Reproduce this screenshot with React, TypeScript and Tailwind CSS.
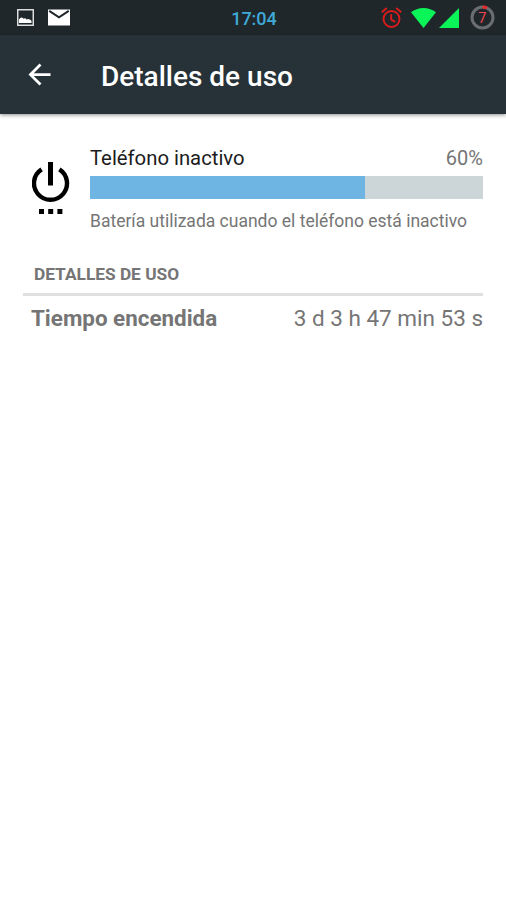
const usage = {
  name: "Teléfono inactivo",
  percent: "60%",
  barWidth: 70,
  summary: "Batería utilizada cuando el teléfono está inactivo",
};

const details = [{ label: "Tiempo encendida", value: "3 d 3 h 47 min 53 s" }];

function StatusBar() {
  return (
    <div className="grid h-[35px] grid-cols-[1fr_auto_1fr] items-center bg-[#20272a]">
      <div className="flex items-center gap-[14px] pl-[17px]">
        <svg width="17" height="17" viewBox="0 0 17 17" fill="none">
          <rect x="0.75" y="0.75" width="15.5" height="15.5" stroke="#e6e8e8" strokeWidth="1.4" />
          <path d="M2 14v-3.600q2.300-3.300 4.600-.7 1.700-1.300 3 .8 2.200-1.400 4.900 1.300V14z" fill="#fff" />
        </svg>
        <svg width="22" height="17" viewBox="0 0 22 17">
          <path d="M0 .5h22v16H0z" fill="#fff" />
          <path d="M1.200 1.800 11 8.300l9.800-6.500" fill="none" stroke="#20272a" strokeWidth="2" />
        </svg>
      </div>
      <time className="pt-0.5 pl-0.5 text-[18px] leading-none font-medium text-[#3fa9d8]">17:04</time>
      <div className="flex items-center justify-end pr-[11px]">
        <svg
          className="mr-[9px]"
          width="21"
          height="22"
          viewBox="0 0 21 22"
          fill="none"
          stroke="#dc1c1c"
          strokeWidth="1.9"
        >
          <circle cx="10.5" cy="12" r="8" />
          <path d="M10.2 7.2v5.3l4 2.4M.8 5.3 5.8 1.1M20.2 5.3l-5-4.2" />
        </svg>
        <svg className="mr-[3px]" width="25" height="20" viewBox="0 0 25 20">
          <path d="M12.500 20 0 4.300C3.500 1.600 7.700 0 12.500 0S21.500 1.600 25 4.300z" fill="#0cf558" />
        </svg>
        <svg className="mr-[11px]" width="20" height="20" viewBox="0 0 20 20">
          <path d="M0 20 20 0v20z" fill="#0cf558" />
        </svg>
        <svg width="25" height="25" viewBox="0 0 25 25" fill="none" strokeWidth="3">
          <circle cx="12.500" cy="12.500" r="10.500" stroke="#6b6e70" />
          <path d="M12.500 2a10.500 10.500 0 0 1 4.500 1" stroke="#e8282c" />
          <text
            x="12.300"
            y="17.500"
            textAnchor="middle"
            fill="#f04450"
            stroke="none"
            className="text-[14.500px]"
          >
            7
          </text>
        </svg>
      </div>
    </div>
  );
}

function AppBar() {
  return (
    <header className="flex h-[79px] items-center bg-[#263238] pl-[23px] shadow-[0_1px_4px_rgba(0,0,0,0.45)]">
      <button type="button" aria-label="Atrás" className="mr-[44px] pr-px pb-px">
        <svg width="33" height="33" viewBox="0 0 24 24" fill="#fff">
          <path d="M20 11H7.830l5.590-5.590L12 4l-8 8 8 8 1.410-1.410L7.830 13H20v-2z" />
        </svg>
      </button>
      <h1 className="pt-[5px] text-[28px] leading-none font-medium text-white">Detalles de uso</h1>
    </header>
  );
}

function PowerIcon() {
  return (
    <svg width="38" height="53" viewBox="0 0 38 53" fill="#000">
      <path d="M16 0h5v23.500h-5z" />
      <path
        d="M9.600 7.400a16.500 16.500 0 1 0 17.800 0"
        fill="none"
        stroke="#000"
        strokeWidth="4.400"
      />
      <path d="M7 47h5v5H7zM16.200 47h5v5h-5zM25.400 47h5v5h-5z" />
    </svg>
  );
}

export default function App() {
  return (
    <div className="h-[900px] w-full bg-white font-['Roboto',sans-serif] text-[#757575]">
      <StatusBar />
      <AppBar />
      <main className="pr-[23px] pl-[23px]">
        <section className="flex pt-[33px] pl-[9px]">
          <div className="mt-[15px] mr-[20px] w-[38px] shrink-0">
            <PowerIcon />
          </div>
          <div className="flex-1">
            <div className="flex h-[29px] items-start justify-between text-[20px] leading-[23px]">
              <span className="text-[20.300px] text-[#1c1c1c]">{usage.name}</span>
              <span>{usage.percent}</span>
            </div>
            <div className="h-[23px] bg-[#ccd5d8]">
              <div className="h-full bg-[#6eb5e3]" style={{ width: `${usage.barWidth}%` }} />
            </div>
            <p className="mt-[12px] text-[17.500px] leading-[21px] whitespace-nowrap">
              {usage.summary}
            </p>
          </div>
        </section>
        <section className="mt-[34px]">
          <h2 className="box-content h-[27px] border-b-[3px] border-[#e0e0e0] pl-[11px] text-[17.300px] leading-none font-bold uppercase">
            Detalles de uso
          </h2>
          <dl>
            {details.map((item) => (
              <div
                key={item.label}
                className="flex justify-between pt-[9px] pl-[8px] text-[22.500px] leading-[26px]"
              >
                <dt className="text-[22.400px] font-bold">{item.label}</dt>
                <dd>{item.value}</dd>
              </div>
            ))}
          </dl>
        </section>
      </main>
    </div>
  );
}
